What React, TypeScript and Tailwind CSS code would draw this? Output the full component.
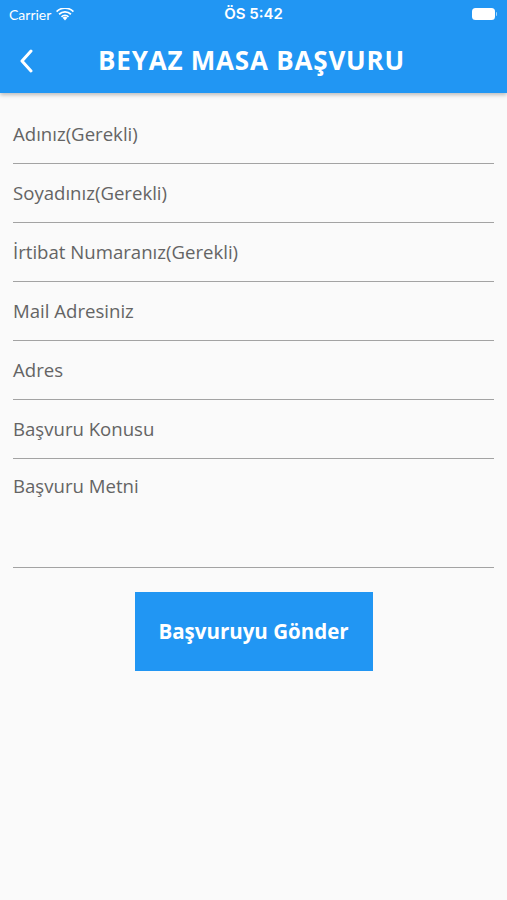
const fields = [
  "Adınız(Gerekli)",
  "Soyadınız(Gerekli)",
  "İrtibat Numaranız(Gerekli)",
  "Mail Adresiniz",
  "Adres",
  "Başvuru Konusu",
];

function StatusBar() {
  return (
    <div className="flex h-[28px] items-center justify-between px-[9px] text-white">
      <div className="flex w-[120px] items-center gap-[5px] text-[14px] font-[Lato,sans-serif]">
        <span>Carrier</span>
        <svg width="18" height="13" viewBox="0 0 18 13" fill="white">
          <path d="M9 12.5l2.4-2.7a3.4 3.4 0 0 0-4.8 0z" />
          <path d="M4.9 8.2l1.2 1.3a4.2 4.2 0 0 1 5.8 0l1.2-1.3a6 6 0 0 0-8.2 0z" />
          <path d="M2.5 5.6l1.2 1.3a7.6 7.6 0 0 1 10.6 0l1.2-1.3a9.4 9.4 0 0 0-13 0z" />
          <path d="M0 3l1.2 1.3a11 11 0 0 1 15.6 0L18 3a12.8 12.8 0 0 0-18 0z" />
        </svg>
      </div>
      <span className="text-[15px] font-semibold font-[Inter,sans-serif]">ÖS 5:42</span>
      <div className="flex w-[120px] justify-end pr-[1px]">
        <div className="flex items-center">
          <div className="h-[12px] w-[23px] rounded-[3.5px] bg-white" />
          <div className="ml-[1px] h-[4px] w-[1.5px] rounded-r-sm bg-white/60" />
        </div>
      </div>
    </div>
  );
}

export default function App() {
  return (
    <div className="min-h-[900px] bg-[#fafafa] font-['Open_Sans',sans-serif]">
      <header className="relative z-10 h-[93px] bg-[#2196f3] shadow-[0_2px_4px_rgba(0,0,0,0.25)]">
        <StatusBar />
        <div className="flex h-[65px] items-center">
          <div className="flex w-[98px] pl-[18px]">
            <svg width="20" height="24" viewBox="0 0 20 24" fill="none" stroke="white" strokeWidth="3" strokeLinecap="round" strokeLinejoin="round">
              <path d="M13 2L4 12l9 10" />
            </svg>
          </div>
          <h1 className="text-[26px] font-bold tracking-[0.8px] text-white">BEYAZ MASA BAŞVURU</h1>
        </div>
      </header>

      <main className="px-[13px] pt-[12px]">
        {fields.map((label) => (
          <div key={label} className="flex h-[59px] items-center border-b-[1.5px] border-[#a3a3a3]">
            <span className="text-[18.6px] text-[#646464]">{label}</span>
          </div>
        ))}
        <div className="h-[109px] border-b-[1.5px] border-[#a3a3a3] pt-[13px]">
          <span className="text-[18.6px] text-[#646464]">Başvuru Metni</span>
        </div>

        <div className="flex justify-center pt-[24px]">
          <button className="h-[79px] w-[238px] bg-[#2196f3] text-[20.5px] font-bold text-white">
            Başvuruyu Gönder
          </button>
        </div>
      </main>
    </div>
  );
}
